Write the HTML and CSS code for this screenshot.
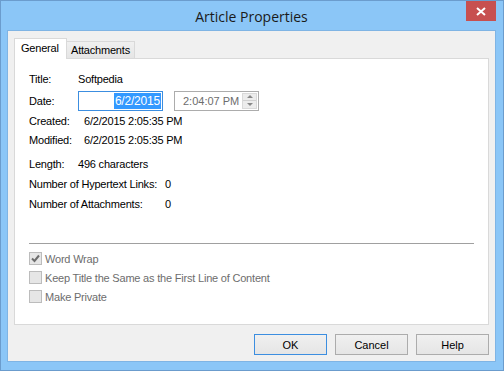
FILE: index.html
```html
<!DOCTYPE html>
<html lang="en">
<head>
  <meta charset="UTF-8" />
  <title>Article Properties</title>
  <link rel="stylesheet" href="styles.css">
</head>
<body>
  <div class="window">
    <div class="titlebar">
      <span class="title">Article Properties</span>
      <div class="close">
        <svg width="10" height="9" viewBox="0 0 10 9">
          <path d="M1 1 L9 8 M9 1 L1 8" stroke="#fff" stroke-width="2" fill="none" />
        </svg>
      </div>
    </div>

    <div class="client">
      <div class="tabs">
        <div class="tab active">General</div>
        <div class="tab">Attachments</div>
      </div>

      <div class="panel">
        <div class="row title-row">
          <span class="lbl">Title:</span><span>Softpedia</span>
        </div>
        <div class="row date-row">
          <span class="lbl">Date:</span>
          <div class="datebox"><span class="sel">6/2/2015</span></div>
          <div class="timebox">
            <span>2:04:07 PM</span>
            <div class="spin">
              <div class="arrow up"></div>
              <div class="arrow down"></div>
            </div>
          </div>
        </div>
        <div class="row">
          <span class="lbl wide">Created:</span><span>6/2/2015 2:05:35 PM</span>
        </div>
        <div class="row">
          <span class="lbl wide">Modified:</span><span>6/2/2015 2:05:35 PM</span>
        </div>
        <div class="row gap">
          <span class="lbl">Length:</span><span>496 characters</span>
        </div>
        <div class="row tight">
          <span class="lbl long">Number of Hypertext Links:</span><span>0</span>
        </div>
        <div class="row tight">
          <span class="lbl long">Number of Attachments:</span><span>0</span>
        </div>

        <div class="separator"></div>

        <div class="check first">
          <span class="box">
            <svg width="11" height="11" viewBox="0 0 11 11">
              <path d="M2 5.5 L4.5 8 L9 2.5" stroke="#6d6d6d" stroke-width="2" fill="none" />
            </svg>
          </span>
          <span>Word Wrap</span>
        </div>
        <div class="check">
          <span class="box"></span><span>Keep Title the Same as the First Line of Content</span>
        </div>
        <div class="check">
          <span class="box"></span><span>Make Private</span>
        </div>
      </div>

      <div class="buttons">
        <button class="btn default">OK</button>
        <button class="btn">Cancel</button>
        <button class="btn">Help</button>
      </div>
    </div>
  </div>
</body>
</html>
```

FILE: styles.css
```css
* { box-sizing: border-box; margin: 0; padding: 0; }
html, body { width: 504px; height: 371px; overflow: hidden; background: #8bc6f7; }
body { font-family: 'Liberation Sans', Arial, sans-serif; font-size: 11px; color: #000; letter-spacing: -0.2px; }

.window {
  width: 504px; height: 371px; border: 1px solid #6b9ccd; background: #8bc6f7;
  padding: 0 7px 8px 6px; display: flex; flex-direction: column;
}
.titlebar {
  height: 29px; display: flex; justify-content: center; align-items: center;
  position: relative;
}
.title { font-family: 'Open Sans', 'Noto Sans', sans-serif; font-size: 14px; color: #1a1a1a; margin-top: 1px; letter-spacing: 0; }
.close {
  position: absolute; top: 0; right: 0; width: 30px; height: 20px;
  background: #c75050; display: flex; justify-content: center; align-items: center;
}

.client {
  flex: 1; background: #f0f0f0; border: 1px solid #7fb4e4;
  padding: 7px 6px 6px 6px; display: flex; flex-direction: column;
}

.tabs { display: flex; align-items: flex-end; height: 20px; position: relative; z-index: 1; }
.tab {
  height: 17px; padding: 0 4px; border: 1px solid #d9d9d9; border-bottom: none;
  background: linear-gradient(#f0f0f0, #e5e5e5); display: flex; align-items: center;
}
.tab + .tab { border-left: none; }
.tab.active {
  height: 21px; margin-bottom: -1px; background: #fff; padding: 0 5px 3px 6px;
  width: 53px; border-color: #d9d9d9;
}

.panel {
  height: 267px; background: #fff; border: 1px solid #d9d9d9;
  padding: 10px 12px 0 14px;
}
.row { height: 19px; display: flex; align-items: center; }
.lbl { width: 49px; }
.lbl.wide { width: 55px; }
.lbl.long { width: 136px; }
.date-row { height: 21px; margin-top: 2px; }
.row.gap { margin-top: 5px; }
.row.tight { margin-top: 1px; }

.datebox {
  width: 85px; height: 20px; border: 1px solid #3c8ee0; background: #fff;
  display: flex; justify-content: flex-end; align-items: center; padding-right: 1px;
}
.sel { background: #3399ff; color: #fff; padding: 1px 1px; line-height: 14px; font-size: 12px; }
.timebox {
  width: 85px; height: 20px; border: 1px solid #acacac; margin-left: 11px;
  display: flex; align-items: center; justify-content: space-between;
  color: #6d6d6d; padding: 0 1px 0 8px; font-size: 11px; letter-spacing: 0;
}
.spin {
  width: 15px; height: 16px; display: flex; flex-direction: column;
  border: 1px solid #d9d9d9; background: #ececec;
}
.arrow { flex: 1; display: flex; justify-content: center; align-items: center; }
.arrow::after { content: ''; border-left: 3px solid transparent; border-right: 3px solid transparent; }
.arrow.up::after { border-bottom: 3px solid #888; }
.arrow.down { border-top: 1px solid #d0d0d0; }
.arrow.down::after { border-top: 3px solid #888; }

.separator { width: 445px; height: 1px; background: #a0a0a0; margin-top: 30px; }
.check { height: 19px; display: flex; align-items: center; color: #6d6d6d; }
.check.first { margin-top: 5px; }
.box {
  width: 13px; height: 13px; border: 1px solid #bcbcbc; background: #e6e6e6;
  margin-right: 3px; display: flex; justify-content: center; align-items: center;
}

.buttons { display: flex; justify-content: flex-end; gap: 8px; margin-top: 9px; }
.btn {
  width: 73px; height: 21px; font-family: inherit; font-size: 11px; color: #000;
  background: linear-gradient(#f0f0f0, #e5e5e5); border: 1px solid #acacac;
}
.btn.default { border-color: #3c8ee0; }
```
